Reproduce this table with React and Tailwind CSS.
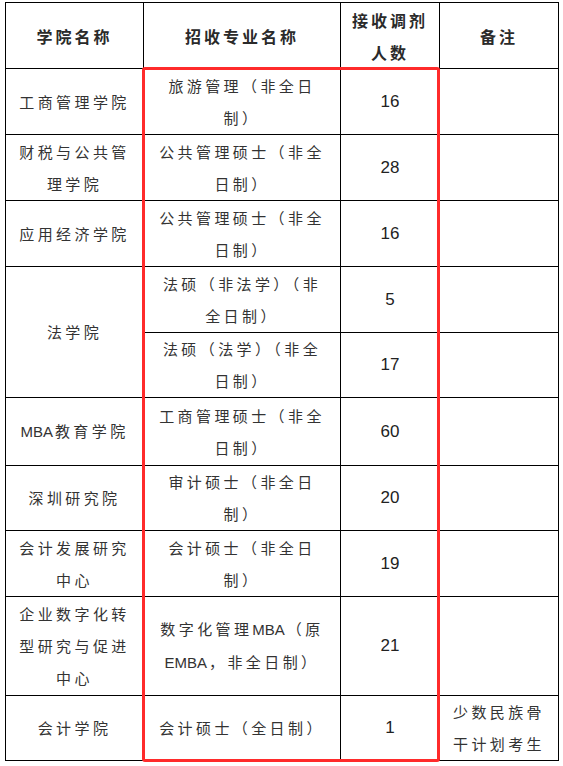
import React from "react";

const L = ({ children }) => <span className="tracking-normal font-['Liberation_Sans_Narrow','Liberation_Sans',sans-serif] text-[15px] mr-[2px]">{children}</span>;

const rows = [
  { school: ["工商管理学院"], major: ["旅游管理（非全日", "制）"], num: "16", note: [], h: "h-[66px]" },
  { school: ["财税与公共管", "理学院"], major: ["公共管理硕士（非全", "日制）"], num: "28", note: [], h: "h-[66px]" },
  { school: ["应用经济学院"], major: ["公共管理硕士（非全", "日制）"], num: "16", note: [], h: "h-[66px]" },
  { school: ["法学院"], span: 2, major: ["法硕（非法学）（非", "全日制）"], num: "5", note: [], h: "h-[66px]" },
  { skipSchool: true, major: ["法硕（法学）（非全", "日制）"], num: "17", note: [], h: "h-[65px]" },
  { school: [<><L>MBA</L>教育学院</>], major: ["工商管理硕士（非全", "日制）"], num: "60", note: [], h: "h-[68px]" },
  { school: ["深圳研究院"], major: ["审计硕士（非全日", "制）"], num: "20", note: [], h: "h-[65px]" },
  { school: ["会计发展研究", "中心"], major: ["会计硕士（非全日", "制）"], num: "19", note: [], h: "h-[66px]" },
  { school: ["企业数字化转", "型研究与促进", "中心"], major: [<>数字化管理<L>MBA</L>（原</>, <><L>EMBA</L>，非全日制）</>], num: "21", note: [], h: "h-[99px]" },
  { school: ["会计学院"], major: ["会计硕士（全日制）"], num: "1", note: ["少数民族骨", "干计划考生"], h: "h-[65px]" },
];

function Lines({ lines }) {
  return (
    <>
      {lines.map((l, i) => (
        <div key={i} className="whitespace-nowrap">
          {l}
        </div>
      ))}
    </>
  );
}

const cell =
  "border border-black text-center align-middle p-0 text-[15px] leading-[32px] tracking-[3.4px] text-[#333] font-['Noto_Sans_CJK_SC','Noto_Sans',sans-serif]";
const head =
  "border border-black text-center align-middle p-0 text-[16px] leading-[32px] tracking-[3px] font-bold text-[#2a2a2a] font-['Noto_Sans_CJK_SC','Noto_Sans',sans-serif]";

export default function App() {
  return (
    <div className="bg-white w-[563px] h-[766px] pl-[5px] pt-[2px]">
      <div className="relative w-[553px]">
        <table className="border-collapse table-fixed w-[553px]">
          <colgroup>
            <col className="w-[138px]" />
            <col className="w-[197px]" />
            <col className="w-[99px]" />
            <col className="w-[119px]" />
          </colgroup>
          <thead>
            <tr className="h-[66px]">
              <th className={head}>学院名称</th>
              <th className={head}>招收专业名称</th>
              <th className={head}>
                <div>接收调剂</div>
                <div>人数</div>
              </th>
              <th className={head}>备注</th>
            </tr>
          </thead>
          <tbody>
            {rows.map((r, i) => (
              <tr key={i} className={r.h}>
                {!r.skipSchool && (
                  <td className={cell} rowSpan={r.span || 1}>
                    <Lines lines={r.school} />
                  </td>
                )}
                <td className={cell}>
                  <Lines lines={r.major} />
                </td>
                <td className="border border-black text-center align-middle p-0 text-[17px] text-[#222] font-['Liberation_Sans',Arial,sans-serif]">
                  {r.num}
                </td>
                <td className={cell}>
                  <Lines lines={r.note} />
                </td>
              </tr>
            ))}
          </tbody>
        </table>
        <div className="absolute left-[137px] top-[65px] w-[298px] h-[695px] border-[3px] border-[#ff2b2b] rounded-[3px] pointer-events-none" />
      </div>
    </div>
  );
}
